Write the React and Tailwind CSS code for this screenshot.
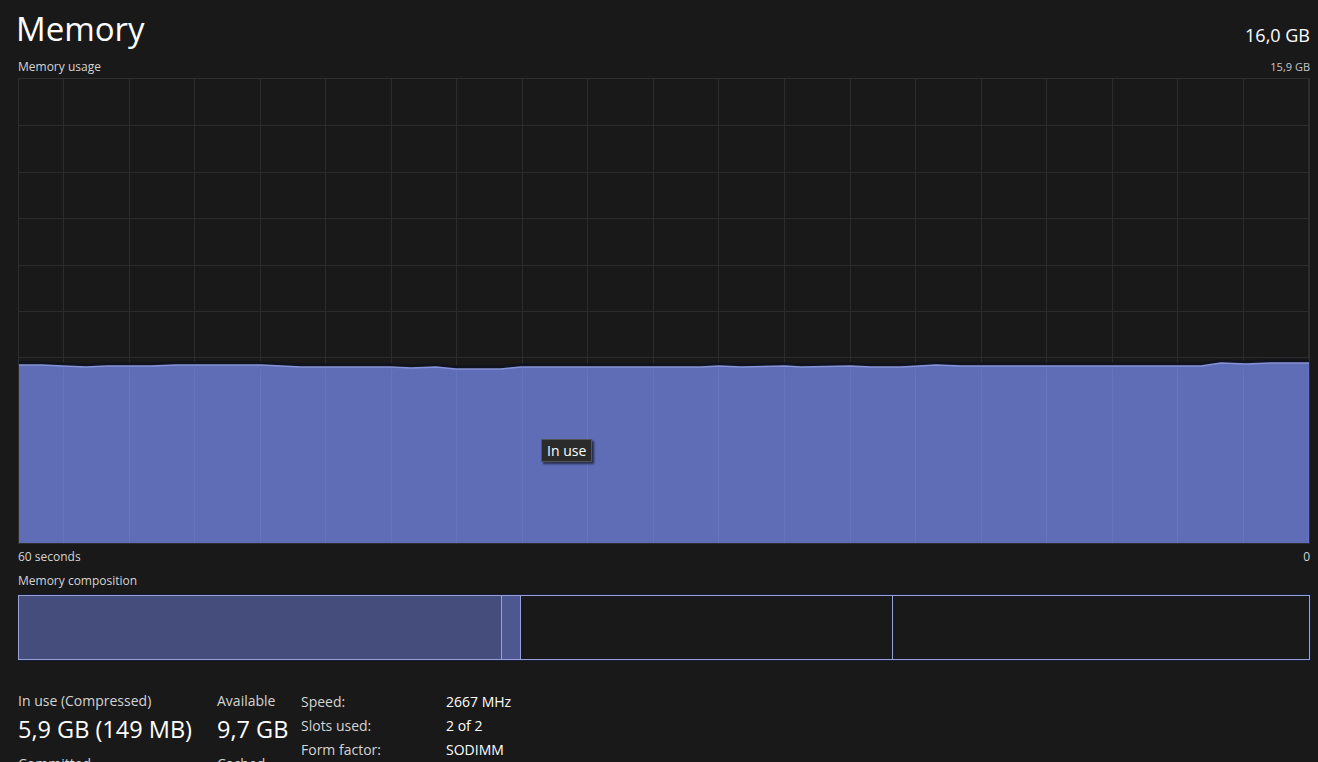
import React from "react";

const W = 1290;
const H = 464;

// usage line, x relative to graph left, y relative to graph top
const usage = [
  [0, 286], [22, 286], [44, 287], [67, 288], [88, 287], [132, 287], [157, 286],
  [242, 286], [282, 288], [372, 288], [392, 289], [417, 288], [437, 290],
  [482, 290], [502, 288], [682, 288], [700, 287], [722, 288], [766, 287],
  [782, 288], [831, 287], [852, 288], [882, 288], [917, 286], [942, 287],
  [1182, 287], [1202, 284], [1227, 285], [1252, 284], [1290, 284],
];

function UsageGraph() {
  const vLines = [];
  for (let x = 44; x < W; x += 65.55) vLines.push(Math.round(x) + 0.5);
  const hLines = [];
  for (let i = 1; i < 10; i++) hLines.push(Math.round(i * 46.4) + 0.5);

  const line = usage.map(([x, y]) => `${x},${y}`).join(" ");
  const area = `0,${H} ${line} ${W},${H}`;

  return (
    <svg width={W} height={H} className="block">
      {vLines.map((x) => (
        <line key={"v" + x} x1={x} y1={0} x2={x} y2={H} stroke="#2c2c2c" strokeWidth="1" />
      ))}
      {hLines.map((y) => (
        <line key={"h" + y} x1={0} y1={y} x2={W} y2={y} stroke="#2c2c2c" strokeWidth="1" />
      ))}
      <polyline points={line} transform="translate(0,-2)" fill="none" stroke="#11131f" strokeWidth="3" />
      <polygon points={area} fill="#5e6db6" />
      {vLines.map((x) => (
        <line key={"f" + x} x1={x} y1={290} x2={x} y2={H} stroke="#6675bd" strokeWidth="1" />
      ))}
      <polyline points={line} fill="none" stroke="#8593d8" strokeWidth="1.5" />
    </svg>
  );
}

export default function App() {
  return (
    <div
      className="w-[1318px] h-[762px] overflow-hidden bg-[#191919] text-white pl-[18px] pr-[8px]"
      style={{ fontFamily: '"Segoe UI", "Open Sans", sans-serif' }}
    >
      {/* Header */}
      <div className="flex justify-between items-end pt-[8px]">
        <h1 className="text-[33px] leading-[41px] -ml-[2px] font-normal">Memory</h1>
        <span className="text-[18px] leading-[24px] mb-[2px]">16,0 GB</span>
      </div>
      <div className="flex justify-between text-[12px] leading-[16px] text-[#d4d4d4] mt-[10px]">
        <span>Memory usage</span>
        <span className="text-[11px] text-[#c8c8c8]">15,9 GB</span>
      </div>

      {/* Usage graph */}
      <div className="relative mt-[3px] w-[1292px] border border-[#2e2e2e]">
        <UsageGraph />
        <div className="absolute left-[522px] top-[360px] bg-[#2b2b2b] border border-[#555] px-[5px] py-[1px] text-[14px] leading-[19px] shadow-[2px_2px_2px_rgba(0,0,0,0.6)]">
          In use
        </div>
      </div>

      <div className="flex justify-between text-[12px] leading-[16px] text-[#d4d4d4] mt-[5px]">
        <span>60 seconds</span>
        <span>0</span>
      </div>
      <div className="text-[12px] leading-[16px] text-[#d4d4d4] mt-[8px]">Memory composition</div>

      {/* Composition bar */}
      <div className="flex mt-[6px] w-[1292px] h-[65px] border border-[#98a0d8] shadow-[0_0_0_1px_#141a38]">
        <div className="w-[482px] bg-[#454d7c]" />
        <div className="w-[19px] bg-[#4d5893] border-l border-[#98a0d8]" />
        <div className="w-[372px] border-l border-[#98a0d8]" />
        <div className="flex-1 border-l border-[#98a0d8]" />
      </div>

      {/* Stats */}
      <div className="flex items-start mt-[32px]">
        <div className="w-[199px]">
          <div className="text-[14px] leading-[18px] text-[#d4d4d4]">In use (Compressed)</div>
          <div className="text-[23.5px] leading-[30px] mt-[4px]">5,9 GB (149 MB)</div>
          <div className="text-[14px] leading-[18px] text-[#d4d4d4] mt-[11px]">Committed</div>
        </div>
        <div className="w-[84px]">
          <div className="text-[14px] leading-[18px] text-[#d4d4d4]">Available</div>
          <div className="text-[23.5px] leading-[30px] mt-[4px]">9,7 GB</div>
          <div className="text-[14px] leading-[18px] text-[#d4d4d4] mt-[11px]">Cached</div>
        </div>
        <div className="grid grid-cols-[145px_auto] text-[14px] leading-[24px] -mt-[2px]">
          <span className="text-[#d4d4d4]">Speed:</span>
          <span>2667 MHz</span>
          <span className="text-[#d4d4d4]">Slots used:</span>
          <span>2 of 2</span>
          <span className="text-[#d4d4d4]">Form factor:</span>
          <span>SODIMM</span>
        </div>
      </div>
    </div>
  );
}
